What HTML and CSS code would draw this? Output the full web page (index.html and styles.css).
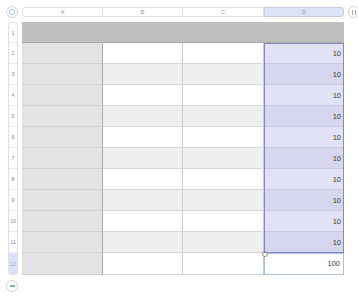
FILE: index.html
```html
<!DOCTYPE html>
<html>
<head>
<meta charset="utf-8">
<link rel="stylesheet" href="styles.css">
</head>
<body>
<div class="app">
  <div class="toolbar">
    <div class="btn corner"><span class="ring"></span></div>
    <div class="colheads">
      <div class="ch">A</div>
      <div class="ch">B</div>
      <div class="ch">C</div>
      <div class="ch sel-head">D</div>
    </div>
    <div class="btn pause"><span class="bar"></span><span class="bar"></span></div>
  </div>
  <div class="main">
    <div class="rowheads">
      <div class="rh">1</div><div class="rh">2</div><div class="rh">3</div><div class="rh">4</div>
      <div class="rh">5</div><div class="rh">6</div><div class="rh">7</div><div class="rh">8</div>
      <div class="rh">9</div><div class="rh">10</div><div class="rh">11</div><div class="rh rh-sel">12</div>
    </div>
    <div class="grid">
      <div class="c head"></div><div class="c head"></div><div class="c head"></div><div class="c head last"></div>

      <div class="c a"></div><div class="c"></div><div class="c"></div><div class="c d even">10</div>
      <div class="c a"></div><div class="c odd"></div><div class="c odd"></div><div class="c d odd-d">10</div>
      <div class="c a"></div><div class="c"></div><div class="c"></div><div class="c d even">10</div>
      <div class="c a"></div><div class="c odd"></div><div class="c odd"></div><div class="c d odd-d">10</div>
      <div class="c a"></div><div class="c"></div><div class="c"></div><div class="c d even">10</div>
      <div class="c a"></div><div class="c odd"></div><div class="c odd"></div><div class="c d odd-d">10</div>
      <div class="c a"></div><div class="c"></div><div class="c"></div><div class="c d even">10</div>
      <div class="c a"></div><div class="c odd"></div><div class="c odd"></div><div class="c d odd-d">10</div>
      <div class="c a"></div><div class="c"></div><div class="c"></div><div class="c d even">10</div>
      <div class="c a"></div><div class="c odd"></div><div class="c odd"></div><div class="c d odd-d">10</div>
      <div class="c a"></div><div class="c"></div><div class="c"></div><div class="c d total">100<span class="handle"></span></div>

      <div class="selection"></div>
    </div>
  </div>
  <div class="footer">
    <div class="btn minus"><span class="dash"></span></div>
  </div>
</div>
</body>
</html>
```

FILE: styles.css
```css
html, body {
  margin: 0;
  padding: 0;
  background: #ffffff;
}
body {
  font-family: "Liberation Sans", Arial, sans-serif;
  width: 358px;
  height: 300px;
  overflow: hidden;
}
.app {
  display: flex;
  flex-direction: column;
}
.toolbar {
  height: 22px;
  display: flex;
  align-items: flex-start;
}
.btn {
  box-sizing: border-box;
  width: 12px;
  height: 12px;
  border-radius: 50%;
  border: 1px solid #d4d4d4;
  background: #fff;
  display: flex;
  align-items: center;
  justify-content: center;
  flex: none;
}
.corner {
  margin: 6px 4px 0 6px;
}
.corner .ring {
  width: 6px;
  height: 6px;
  box-sizing: border-box;
  border-radius: 50%;
  border: 1.5px solid #9fc3e6;
}
.pause {
  margin: 6px 0 0 4px;
  gap: 1.5px;
}
.pause .bar {
  width: 1px;
  height: 5px;
  background: #a8a8a8;
}
.colheads {
  margin-top: 7px;
  width: 322px;
  height: 10px;
  display: grid;
  grid-template-columns: 81px 80px 81px 80px;
  flex: none;
}
.ch {
  box-sizing: border-box;
  border-top: 1px solid #e0e0e0;
  border-bottom: 1px solid #e0e0e0;
  border-right: 1px solid #e0e0e0;
  font-size: 5.5px;
  color: #9a9a9a;
  display: flex;
  align-items: center;
  justify-content: center;
  background: #fff;
}
.ch:first-child {
  border-left: 1px solid #e0e0e0;
  border-radius: 3px 0 0 3px;
}
.ch.sel-head {
  background: #dde4f8;
  border-color: #c3cde8;
  color: #7c8fb8;
  border-radius: 0 3px 3px 0;
  border-left: 1px solid #c3cde8;
}
.main {
  display: flex;
  align-items: flex-start;
}
.rowheads {
  margin-left: 8px;
  margin-right: 4px;
  width: 10px;
  box-sizing: border-box;
  border: 1px solid #e0e0e0;
  border-radius: 3px;
  display: flex;
  flex-direction: column;
  overflow: hidden;
}
.rh {
  height: 21px;
  box-sizing: border-box;
  border-bottom: 1px solid #ececec;
  font-size: 5.5px;
  color: #8a8a8a;
  display: flex;
  align-items: center;
  justify-content: center;
}
.rh:first-child {
  height: 20px;
}
.rh-sel {
  height: 21px;
  background: #d9e3f8;
  color: #8ea6d6;
  border-bottom: none;
}
.grid {
  position: relative;
  display: grid;
  grid-template-columns: 81px 80px 81px 80px;
  grid-template-rows: repeat(11, 21px) 22px;
  width: 322px;
}
.c {
  box-sizing: border-box;
  border-right: 1px solid #cbcbcb;
  border-bottom: 1px solid #d6d6d6;
  background: #ffffff;
  font-size: 7.5px;
  color: #3a3a3a;
  display: flex;
  align-items: center;
  justify-content: flex-end;
  padding-right: 3px;
  position: relative;
}
.c.head {
  background: #bebebe;
  border-right: none;
  border-bottom: 1px solid #a9a9a9;
}
.c.a {
  background: #e3e3e3;
  border-right: 1px solid #a8a8a8;
  border-bottom: 1px solid #cfcfcf;
}
.c.odd {
  background: #efefef;
}
.c.d {
  border-right: none;
}
.c.even {
  background: #e2e2f7;
  border-bottom: 1px solid #c8c8e2;
}
.c.odd-d {
  background: #d6d6ee;
  border-bottom: 1px solid #c8c8e2;
}
.c.total {
  background: #fff;
  border: 1.5px solid #a9c3df;
  align-items: flex-start;
  padding-top: 5px;
}
.handle {
  position: absolute;
  left: -3.5px;
  top: -3.5px;
  width: 4px;
  height: 4px;
  border-radius: 50%;
  border: 1px solid #8c8c8c;
  background: #fff;
}
.selection {
  position: absolute;
  grid-column: 4;
  grid-row: 2 / 12;
  inset: 0;
  border: 1px solid #8585c9;
  pointer-events: none;
}
.footer {
  padding: 5px 0 0 6px;
}
.minus .dash {
  width: 5px;
  height: 1.5px;
  background: #86b8a8;
}
```
